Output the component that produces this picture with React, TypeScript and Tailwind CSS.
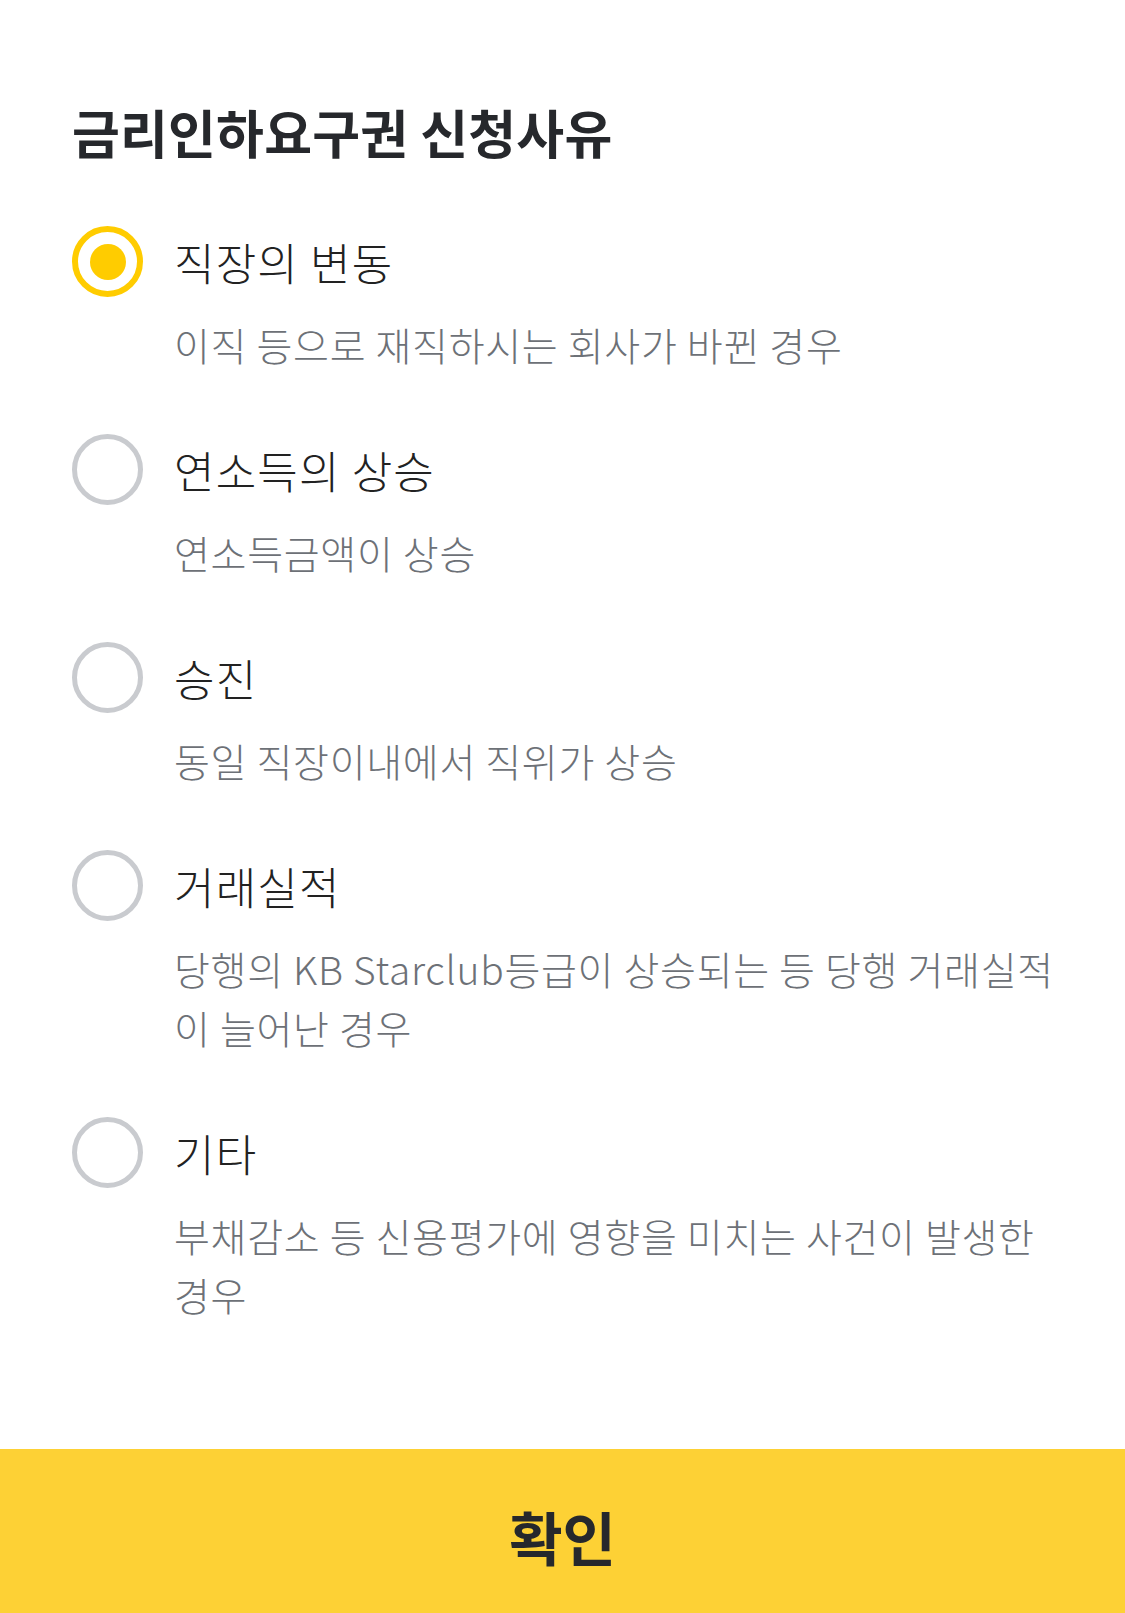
import React, { useState } from 'react';

interface Reason {
  id: string;
  label: string;
  desc: string[];
}

const reasons: Reason[] = [
  { id: 'job', label: '직장의 변동', desc: ['이직 등으로 재직하시는 회사가 바뀐 경우'] },
  { id: 'income', label: '연소득의 상승', desc: ['연소득금액이 상승'] },
  { id: 'promotion', label: '승진', desc: ['동일 직장이내에서 직위가 상승'] },
  {
    id: 'trade',
    label: '거래실적',
    desc: ['당행의 KB Starclub등급이 상승되는 등 당행 거래실적', '이 늘어난 경우'],
  },
  {
    id: 'etc',
    label: '기타',
    desc: ['부채감소 등 신용평가에 영향을 미치는 사건이 발생한', '경우'],
  },
];

const font = { fontFamily: '"Noto Sans CJK KR", "Noto Sans", sans-serif' };

const Radio: React.FC<{ checked: boolean }> = ({ checked }) =>
  checked ? (
    <div className="w-[71px] h-[71px] shrink-0 rounded-full border-[6px] border-[#ffcc00] flex items-center justify-center">
      <div className="w-[36px] h-[36px] rounded-full bg-[#ffcc00]" />
    </div>
  ) : (
    <div className="w-[71px] h-[71px] shrink-0 rounded-full border-[5px] border-[#c9cbcf]" />
  );

export default function App() {
  const [selected, setSelected] = useState('job');

  return (
    <div className="w-[1125px] h-[1613px] bg-white flex flex-col" style={font}>
      <div className="flex-1 px-[72px] pt-[96px]">
        <h2 className="text-[52px] leading-[72px] font-bold text-[#26282c] tracking-[0.2px]">
          금리인하요구권 신청사유
        </h2>

        <div className="mt-[58px] flex flex-col gap-[60px]">
          {reasons.map((r) => (
            <button
              key={r.id}
              type="button"
              onClick={() => setSelected(r.id)}
              className="flex items-start gap-[31px] text-left"
            >
              <Radio checked={selected === r.id} />
              <div className="flex flex-col">
                <span className="text-[44px] leading-[72px] text-[#222222] font-light tracking-[1.2px]">
                  {r.label}
                </span>
                <p className="mt-[17px] text-[39px] leading-[59px] text-[#6d7177] font-light tracking-[0.7px] whitespace-nowrap">
                  {r.desc.map((line, i) => (
                    <React.Fragment key={i}>
                      {i > 0 && <br />}
                      {line}
                    </React.Fragment>
                  ))}
                </p>
              </div>
            </button>
          ))}
        </div>
      </div>

      <button
        type="button"
        className="h-[164px] w-full bg-[#fdd135] pt-[10px] text-[58px] font-bold text-[#26282c]"
      >
        확인
      </button>
    </div>
  );
}
